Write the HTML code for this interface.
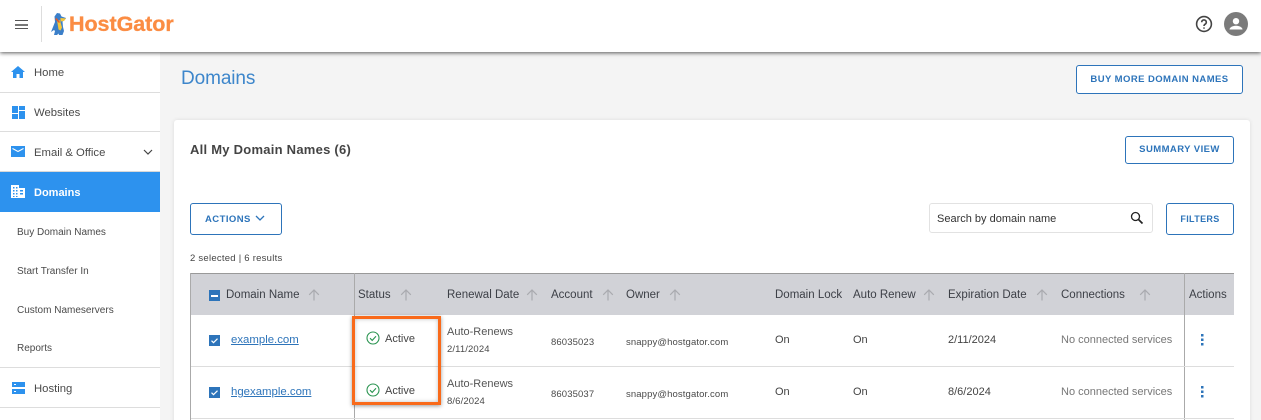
<!DOCTYPE html>
<html style="overflow:hidden;height:420px"><head><meta charset="utf-8"><style>
html,body{margin:0;padding:0}
body{width:1261px;height:420px;overflow:hidden;position:relative;background:#f4f4f4;font-family:"Liberation Sans",sans-serif;color:#444}
.a,.t{position:absolute}
.t{white-space:nowrap;line-height:16px;font-size:11px;letter-spacing:0}
.btn{position:absolute;box-sizing:border-box;border:1px solid #2d74ba;border-radius:3px;background:#fff;color:#2d74ba;font-weight:bold;font-size:9.5px;letter-spacing:.43px;text-align:center;white-space:nowrap}
.sep{position:absolute;left:0;width:160px;height:1px;background:#ddd}
.nav{font-size:11.3px;color:#4a4a4a}
.sub{font-size:10px;color:#4a4a4a}
.h{font-size:11.5px;color:#3c3f46}
.ar{position:absolute;top:289px;width:12px;height:12px}
.s{font-size:9.5px;letter-spacing:.12px;color:#4a4a4a}
.l{color:#2d74ba;text-decoration:underline;font-size:11.4px}
.cb{position:absolute;left:209px;width:11px;height:11px;background:#2d74ba}
</style></head><body>
<div class="a" style="left:0;top:52px;width:160px;height:368px;background:#fff"></div>
<div class="a" style="left:174px;top:120px;width:1076px;height:310px;background:#fff;border-radius:3px;box-shadow:0 0 4px rgba(0,0,0,.1)"></div>

<!-- header -->
<div class="a" style="left:0;top:0;width:1261px;height:52px;background:#fff;box-shadow:0 1px 4px rgba(0,0,0,.65)"></div>
<div class="a" style="left:15px;top:20px;width:13px;height:1px;background:#555"></div>
<div class="a" style="left:15px;top:24px;width:13px;height:2px;background:#777"></div>
<div class="a" style="left:15px;top:28px;width:13px;height:1px;background:#555"></div>
<div class="a" style="left:41px;top:6px;width:1px;height:36px;background:#ddd"></div>
<svg class="a" style="left:50px;top:12px" width="17" height="24" viewBox="0 0 17 24">
<path d="M7 1l3 .5 1.500 3L16 6l-2 2.500-1.500 1L13 15l1 4-1.500 4H9l-.5-1.500L7 23H4l1-4-1-1-3 2 2-5 2-5-.5-5.500z" fill="#3b7fc9"/>
<path d="M7 8l3 .5 2 7-1.500 3-2-1z" fill="#f5c63a"/>
<path d="M10.500 6L16 6.500l-2 2.500-3.500.5z" fill="#f5c63a"/>
<path d="M5 7l4 4 1-1-3.500-4z" fill="#e0592a"/>
</svg>
<div class="t" style="left:69px;top:11px;font-size:21.500px;line-height:26px;font-weight:bold;color:#fb8c43;letter-spacing:-.05px;-webkit-text-stroke:.3px #fb8c43">HostGator</div>
<svg class="a" style="left:1195px;top:15px" width="18" height="18" viewBox="0 0 18 18" fill="none" stroke="#444" stroke-width="1.600">
<circle cx="9" cy="9" r="7.400"/><path d="M6.700 7.200a2.300 2.300 0 1 1 3.600 1.900c-.8.500-1.300 1-1.300 1.900"/><path d="M9 12.400v1.300"/></svg>
<svg class="a" style="left:1224px;top:12px" width="24" height="24" viewBox="0 0 24 24">
<circle cx="12" cy="12" r="12" fill="#7b7b7b"/><circle cx="12" cy="9.200" r="3.200" fill="#fff"/><path d="M5.500 17.500c0-2.600 4-3.800 6.500-3.800s6.500 1.200 6.500 3.800z" fill="#fff"/></svg>

<!-- sidebar -->
<div class="sep" style="top:92px"></div><div class="sep" style="top:131px"></div>
<div class="sep" style="top:171px;background:#d8d8d8"></div>
<div class="a" style="left:0;top:172px;width:160px;height:40px;background:#2d92ee"></div>
<div class="sep" style="top:367px"></div><div class="sep" style="top:407px"></div>
<svg class="a" style="left:11px;top:66px" width="14" height="12" viewBox="0 0 14 12"><path d="M7 0L0 6h2v6h3.500V8h3v4H12V6h2z" fill="#2d92ee"/></svg>
<svg class="a" style="left:12px;top:106px" width="13" height="13" viewBox="0 0 13 13" fill="#2d92ee"><rect width="6" height="7"/><rect y="8" width="6" height="5"/><rect x="7" width="6" height="4"/><rect x="7" y="5" width="6" height="8"/></svg>
<svg class="a" style="left:11px;top:146px" width="14" height="11" viewBox="0 0 14 11"><rect width="14" height="11" fill="#2d92ee"/><path d="M1.500 2.500L7 5.500l5.500-3" fill="none" stroke="#fff" stroke-width="1"/></svg>
<svg class="a" style="left:11px;top:185px" width="14" height="13" viewBox="0 0 14 13" fill="#fff"><path d="M0 0h8v3h6v10H0zM2 2v1.500h1.500V2zm3 0v1.500h1.500V2zM2 5v1.500h1.500V5zm3 0v1.500h1.500V5zM2 8v1.500h1.500V8zm3 0v1.500h1.500V8zm4-3v1.500h3V5zm0 3v1.500h3V8zM2 11v1h1.500v-1zm3 0v1h1.500v-1z" fill-rule="evenodd"/></svg>
<svg class="a" style="left:12px;top:382px" width="13" height="12" viewBox="0 0 13 12" fill="#2d92ee"><rect width="13" height="5"/><rect y="7" width="13" height="5"/><rect x="2" y="2" width="2" height="1" fill="#fff"/><rect x="2" y="9" width="2" height="1" fill="#fff"/></svg>
<svg class="a" style="left:143px;top:149px" width="10" height="7" viewBox="0 0 10 7"><path d="M1 1l4 4 4-4" fill="none" stroke="#444" stroke-width="1.200"/></svg>
<div class="t nav" style="left:34px;top:65px">Home</div>
<div class="t nav" style="left:34px;top:105px">Websites</div>
<div class="t nav" style="left:34px;top:145px">Email &amp; Office</div>
<div class="t nav" style="left:34px;top:185px;color:#fff;font-weight:bold;font-size:11px">Domains</div>
<div class="t sub" style="left:17px;top:225px">Buy Domain Names</div>
<div class="t sub" style="left:17px;top:264px">Start Transfer In</div>
<div class="t sub" style="left:17px;top:303px">Custom Nameservers</div>
<div class="t sub" style="left:17px;top:341px">Reports</div>
<div class="t nav" style="left:34px;top:381px">Hosting</div>

<!-- main top -->
<div class="t" style="left:181px;top:66px;font-size:19px;line-height:26px;color:#3d86cb;letter-spacing:-.1px">Domains</div>
<div class="btn" style="left:1076px;top:65px;width:167px;height:29px;line-height:27px">BUY MORE DOMAIN NAMES</div>
<div class="t" style="left:190px;top:142px;font-size:13px;font-weight:bold;color:#444;letter-spacing:.25px">All My Domain Names (6)</div>
<div class="btn" style="left:1125px;top:136px;width:109px;height:28px;line-height:26px">SUMMARY VIEW</div>
<div class="btn" style="left:190px;top:203px;width:92px;height:32px;line-height:31px;text-align:left;padding-left:14px">ACTIONS</div>
<svg class="a" style="left:255px;top:215px" width="10" height="7" viewBox="0 0 10 7"><path d="M1 1l4 4 4-4" fill="none" stroke="#2d74ba" stroke-width="1.300"/></svg>
<div class="a" style="left:929px;top:203px;width:222px;height:28px;border:1px solid #e2e2e2;border-radius:3px;background:#fff"></div>
<div class="t" style="left:937px;top:211px;font-size:11px;color:#333">Search by domain name</div>
<svg class="a" style="left:1130px;top:211px" width="14" height="14" viewBox="0 0 14 14" fill="none" stroke="#222"><circle cx="5.500" cy="5.500" r="4" stroke-width="1.300"/><path d="M8.500 8.500l4 4" stroke-width="1.700"/></svg>
<div class="btn" style="left:1166px;top:203px;width:68px;height:32px;line-height:31px;font-size:9px;letter-spacing:.35px">FILTERS</div>
<div class="t" style="left:190px;top:251px;font-size:9.500px;letter-spacing:.25px;color:#444">2 selected | 6 results</div>

<!-- table -->
<div class="a" style="left:190px;top:273px;width:1044px;height:42px;background:#d1d2d7;border-top:1px solid #999;box-sizing:border-box"></div>
<div class="a" style="left:190px;top:273px;width:1px;height:147px;background:#aaa"></div>
<div class="a" style="left:354px;top:273px;width:1px;height:147px;background:#aaa"></div>
<div class="a" style="left:1184px;top:273px;width:1px;height:147px;background:#aaa"></div>
<div class="a" style="left:191px;top:366px;width:1043px;height:1px;background:#ddd"></div>
<div class="a" style="left:191px;top:418px;width:1043px;height:1px;background:#ddd"></div>

<div class="cb" style="top:290px"><div class="a" style="left:2px;top:5px;width:7px;height:1.500px;background:#fff"></div></div>
<div class="t h" style="left:226px;top:287px">Domain Name</div>
<div class="t h" style="left:358px;top:287px">Status</div>
<div class="t h" style="left:447px;top:287px">Renewal Date</div>
<div class="t h" style="left:551px;top:287px">Account</div>
<div class="t h" style="left:626px;top:287px">Owner</div>
<div class="t h" style="left:775px;top:287px">Domain Lock</div>
<div class="t h" style="left:853px;top:287px">Auto Renew</div>
<div class="t h" style="left:948px;top:287px">Expiration Date</div>
<div class="t h" style="left:1061px;top:287px">Connections</div>
<div class="t h" style="left:1189px;top:287px">Actions</div>
<svg width="0" height="0" style="position:absolute"><symbol id="u" viewBox="0 0 12 12"><path d="M6 11.500V1M1.200 5.800L6 1l4.800 4.800" fill="none" stroke="#a9aaaf" stroke-width="1.200"/></symbol></svg>
<svg class="ar" style="left:308px"><use href="#u"/></svg>
<svg class="ar" style="left:400px"><use href="#u"/></svg>
<svg class="ar" style="left:526px"><use href="#u"/></svg>
<svg class="ar" style="left:602px"><use href="#u"/></svg>
<svg class="ar" style="left:669px"><use href="#u"/></svg>
<svg class="ar" style="left:923px"><use href="#u"/></svg>
<svg class="ar" style="left:1036px"><use href="#u"/></svg>
<svg class="ar" style="left:1139px"><use href="#u"/></svg>

<!-- row 1 -->
<div class="cb" style="top:335px"><svg class="a" style="left:0;top:0" width="11" height="11"><path d="M2.500 5.700l2 2 4-4" fill="none" stroke="#fff" stroke-width="1.200"/></svg></div>
<div class="t l" style="left:231px;top:332px">example.com</div>
<svg class="a" style="left:366px;top:331px" width="14" height="14" viewBox="0 0 14 14" fill="none" stroke="#2b9451" stroke-width="1.100"><circle cx="7" cy="7" r="6"/><path d="M4 7.200l2.200 2.200L10 5.200"/></svg>
<div class="t" style="left:385px;top:331px;color:#444">Active</div>
<div class="t" style="left:447px;top:324px;color:#555">Auto-Renews</div>
<div class="t s" style="left:447px;top:342px">2/11/2024</div>
<div class="t s" style="left:551px;top:335px">86035023</div>
<div class="t s" style="left:626px;top:335px">snappy@hostgator.com</div>
<div class="t" style="left:775px;top:332px">On</div>
<div class="t" style="left:853px;top:332px">On</div>
<div class="t" style="left:948px;top:332px">2/11/2024</div>
<div class="t" style="left:1061px;top:332px;color:#777">No connected services</div>
<svg class="a" style="left:1200px;top:334px" width="5" height="12" fill="#2d74ba"><rect x="1" width="2.500" height="2.500"/><rect x="1" y="4.500" width="2.500" height="2.500"/><rect x="1" y="9" width="2.500" height="2.500"/></svg>

<!-- row 2 -->
<div class="cb" style="top:387px"><svg class="a" style="left:0;top:0" width="11" height="11"><path d="M2.500 5.700l2 2 4-4" fill="none" stroke="#fff" stroke-width="1.200"/></svg></div>
<div class="t l" style="left:231px;top:384px">hgexample.com</div>
<svg class="a" style="left:366px;top:383px" width="14" height="14" viewBox="0 0 14 14" fill="none" stroke="#2b9451" stroke-width="1.100"><circle cx="7" cy="7" r="6"/><path d="M4 7.200l2.200 2.200L10 5.200"/></svg>
<div class="t" style="left:385px;top:383px;color:#444">Active</div>
<div class="t" style="left:447px;top:376px;color:#555">Auto-Renews</div>
<div class="t s" style="left:447px;top:394px">8/6/2024</div>
<div class="t s" style="left:551px;top:387px">86035037</div>
<div class="t s" style="left:626px;top:387px">snappy@hostgator.com</div>
<div class="t" style="left:775px;top:384px">On</div>
<div class="t" style="left:853px;top:384px">On</div>
<div class="t" style="left:948px;top:384px">8/6/2024</div>
<div class="t" style="left:1061px;top:384px;color:#777">No connected services</div>
<svg class="a" style="left:1200px;top:386px" width="5" height="12" fill="#2d74ba"><rect x="1" width="2.500" height="2.500"/><rect x="1" y="4.500" width="2.500" height="2.500"/><rect x="1" y="9" width="2.500" height="2.500"/></svg>

<!-- highlight -->
<div class="a" style="left:352px;top:316px;width:89px;height:89px;box-sizing:border-box;border:3px solid #f96a1a;box-shadow:0 1px 4px rgba(0,0,0,.4),inset 0 0 4px rgba(0,0,0,.25)"></div>
</body></html>
